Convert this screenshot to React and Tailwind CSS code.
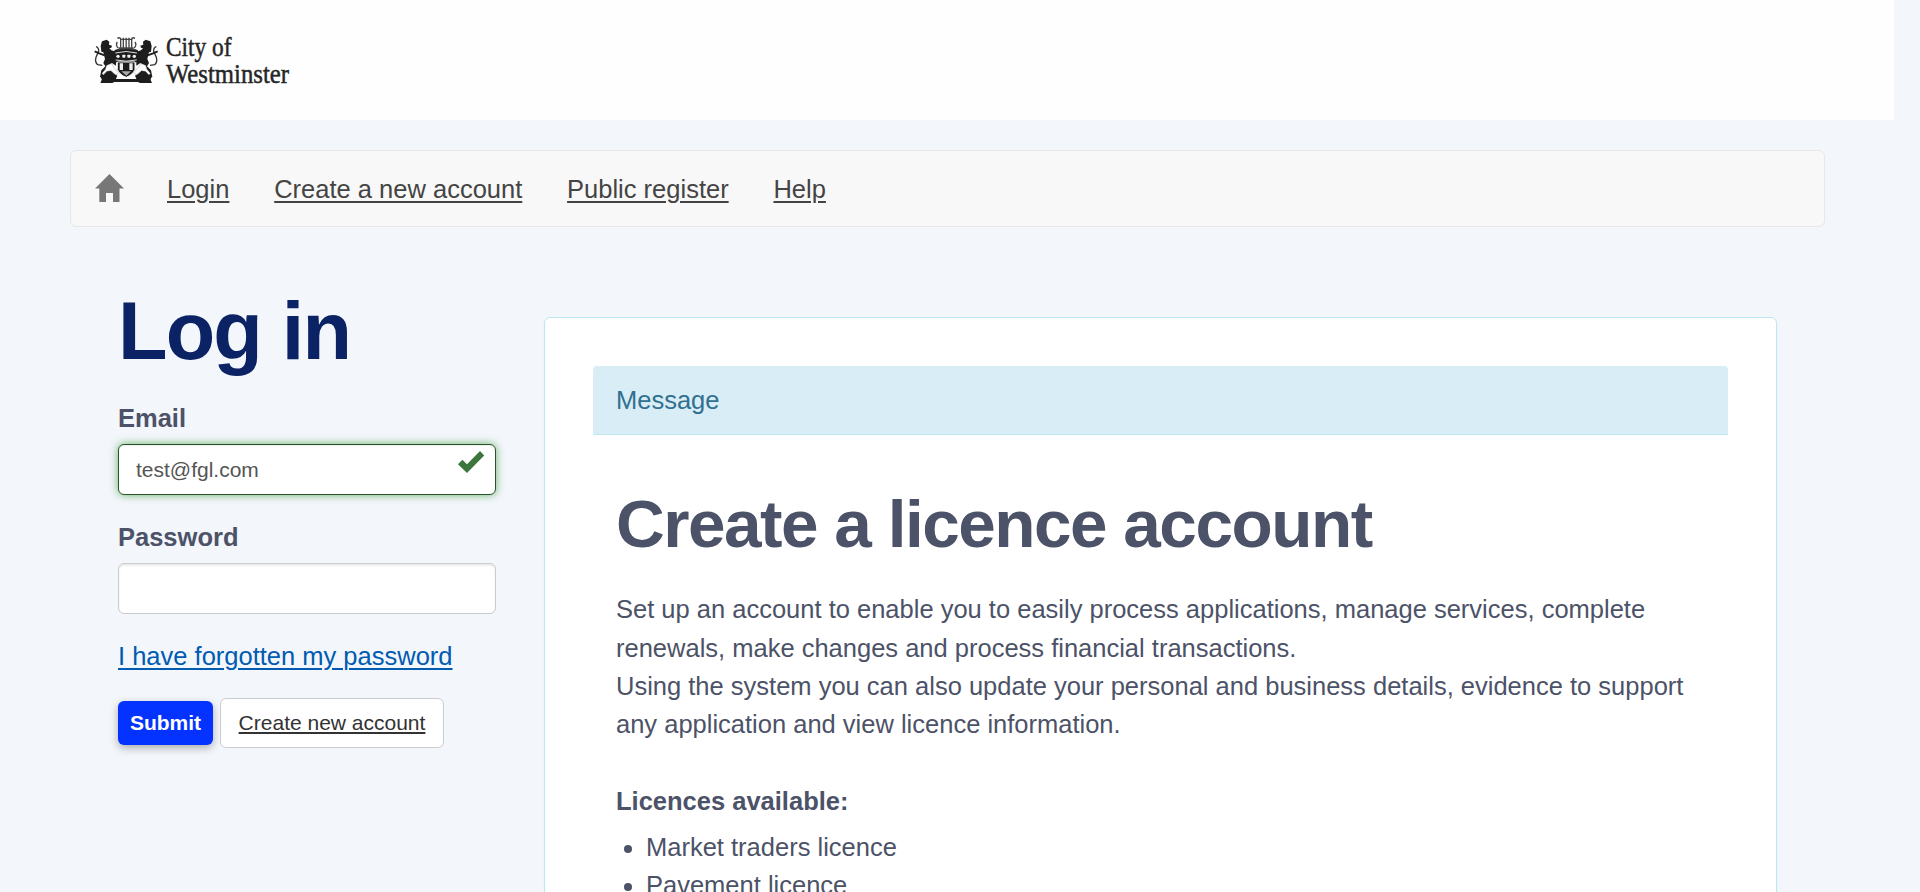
const navLinks = ["Login", "Create a new account", "Public register", "Help"];
const licences = ["Market traders licence", "Pavement licence"];

function Logo() {
  return (
    <svg width="200" height="60" viewBox="92 30 200 60" className="block" role="img" aria-label="City of Westminster">
      <g transform="translate(90 30) scale(.3333)">
        <g id="supporter">
          <path d="M32 48l4-14 14-5 8 6-1 9 9 3-2 6-6 2 6 6 14 4v42l-12-8-12 6 4 12 14 14 10 6-6 14H36l-2-10-4 0 4-20 12-12-6-10 5-12-5-20-6-2z" fill="#1d1d1d" />
          <path d="M18 50q9 3 8 14l-8 18q-4 14 5 22l14 2" fill="none" stroke="#333" strokeWidth="4" />
          <path d="M14 64l14 6 16 6" fill="none" stroke="#1d1d1d" strokeWidth="6" />
          <path d="M50 106l16-5 6 12 13 14-6 8-16-13-12 2-11 11-4-5 10-12z" fill="#fefefe" stroke="#777" strokeWidth="1" />
        </g>
        <use href="#supporter" transform="matrix(-1 0 0 1 217 0)" />
        <path d="M30 139l16-4 12 4 12 8h77l12-8 12-4 16 4-6 9 5 11h-36l-6-3H73l-6 3H31l5-11z" fill="#1d1d1d" />
        <path d="M74 60q34-12 69 0l5 17-7 19q-32 9-65 0l-7-19z" fill="#1d1d1d" />
        <path d="M76 69q32-9 65 0M77 90q32 7 63 0" fill="none" stroke="#ddd" strokeWidth="3" />
        <g fill="#f1f1f1">
          <circle cx="84" cy="79" r="5" />
          <rect x="97" y="74" width="9" height="9" rx="2" />
          <rect x="112" y="74" width="9" height="9" rx="2" />
          <circle cx="133" cy="79" r="5" />
        </g>
        <path d="M82 96h53v22q-6 16-26.500 24Q88 134 82 118z" fill="#1d1d1d" stroke="#eee" strokeWidth="3" />
        <path d="M89 100h10v20H89zM118 100h10v20h-10z" fill="#eee" />
        <path d="M94 124h29l-14 13z" fill="#aaa" />
        <g fill="none" stroke="#444" strokeWidth="4">
          <path d="M82 25q10-5 10 4v24M135 25q-10-5-10 4v24M100 23v30M108.500 23v30M117 23v30" />
          <path d="M90 28h37M86 54h45M82 36q-6 8 2 18M135 36q6 8-2 18M80 60q28-8 57 0" />
        </g>
      </g>
      <g fill="#262626" stroke="#262626" strokeWidth=".5" fontFamily="'Liberation Serif', 'Times New Roman', serif" fontSize="28">
        <text x="166" y="56" textLength="65.500" lengthAdjust="spacingAndGlyphs">City of</text>
        <text x="166" y="82.500" textLength="123" lengthAdjust="spacingAndGlyphs">Westminster</text>
      </g>
    </svg>
  );
}

function HomeIcon() {
  return (
    <svg width="29" height="28" viewBox="0 0 29 28" className="block" aria-hidden="true">
      <path d="M14.500 0L29 14.500h-4.500V28H18v-9h-7v9H4.300V14.500H0z" fill="#777" />
    </svg>
  );
}

function CheckIcon() {
  return (
    <svg width="27" height="22" viewBox="0 0 27 22" className="absolute right-[10px] top-[6px]" aria-hidden="true">
      <path d="M0 13.200L4.400 8.800 9 13.200 22 0l4.200 4.400L9 22z" fill="#3c763d" />
    </svg>
  );
}

export default function App() {
  return (
    <div className="h-[892px] overflow-hidden bg-[#f3f6fb] font-['Liberation_Sans',Arial,sans-serif] text-[25.5px] leading-[38.25px] text-[#4c5267]">
      <header className="h-[120px] w-[1894px] bg-[#fefefe] pl-[92px] pt-[30px]">
        <Logo />
      </header>

      <nav className="ml-[70px] mt-[30px] flex h-[77px] w-[1755px] items-start rounded-[6px] border border-[#e7e7e7] bg-[#f8f8f8] pl-6">
        <a className="mr-[43px] mt-[23px]"><HomeIcon /></a>
        <div className="mt-[19px] flex gap-[44.8px] text-[#444]">
          {navLinks.map((link) => (
            <a key={link} className="underline decoration-2 underline-offset-[3px]">{link}</a>
          ))}
        </div>
      </nav>

      <main className="flex pl-[118px]">
        <section className="w-[378px] pt-[58px]">
          <h1 className="text-[81px] font-bold leading-[92px] tracking-[-1.8px] text-[#0b2265]">Log in</h1>
          <div className="mt-[22px] font-bold">Email</div>
          <div className="relative mt-[7px] flex h-[51px] items-center rounded-[6px] border border-[#2b542c] bg-white pl-[17px] text-[21px] leading-[30px] text-[#555] shadow-[inset_0_1px_1px_rgba(0,0,0,0.075),0_0_9px_#67b168]">
            test@fgl.com
            <CheckIcon />
          </div>
          <div className="mt-[22.5px] font-bold">Password</div>
          <div className="mt-[6.5px] h-[51px] rounded-[6px] border border-[#ccc] bg-white shadow-[inset_0_1.5px_2px_rgba(0,0,0,0.1)]" />
          <a className="mt-[23px] block text-[#005bb1] underline decoration-2 underline-offset-[3px]">I have forgotten my password</a>
          <div className="mt-[23px] flex items-center gap-[7px] text-[21px] leading-[30px]">
            <button className="h-[44px] w-[95px] rounded-[6px] bg-[#0433ff] font-bold text-white shadow-[0_3px_8px_rgba(0,0,0,0.3)]">Submit</button>
            <a className="flex h-[50px] w-[224px] items-center justify-center rounded-[6px] border border-[#ccc] bg-white text-[#333] underline decoration-2 underline-offset-2">Create new account</a>
          </div>
        </section>

        <section className="ml-[48px] mt-[90px] h-[700px] w-[1233px] rounded-[6px] border border-[#bce8f1] bg-white p-12 shadow-[0_1px_2px_rgba(0,0,0,0.05)]">
          <div className="h-[69px] rounded-t-[4px] border-b border-[#bce8f1] bg-[#d9edf7] pl-[23px] pt-[15px] text-[#31708f]">Message</div>
          <div className="px-[23px]">
            <h2 className="mt-[50px] text-[67.5px] font-bold leading-[78px] tracking-[-1.5px]">Create a licence account</h2>
            <p className="mt-[27.4px]">
              Set up an account to enable you to easily process applications, manage services, complete renewals, make changes and process financial transactions.
              <br />
              Using the system you can also update your personal and business details, evidence to support any application and view licence information.
            </p>
            <p className="mt-[38.3px] font-bold">Licences available:</p>
            <ul className="mt-[8.3px] list-disc pl-[30px]">
              {licences.map((licence) => (
                <li key={licence}>{licence}</li>
              ))}
            </ul>
          </div>
        </section>
      </main>
    </div>
  );
}
